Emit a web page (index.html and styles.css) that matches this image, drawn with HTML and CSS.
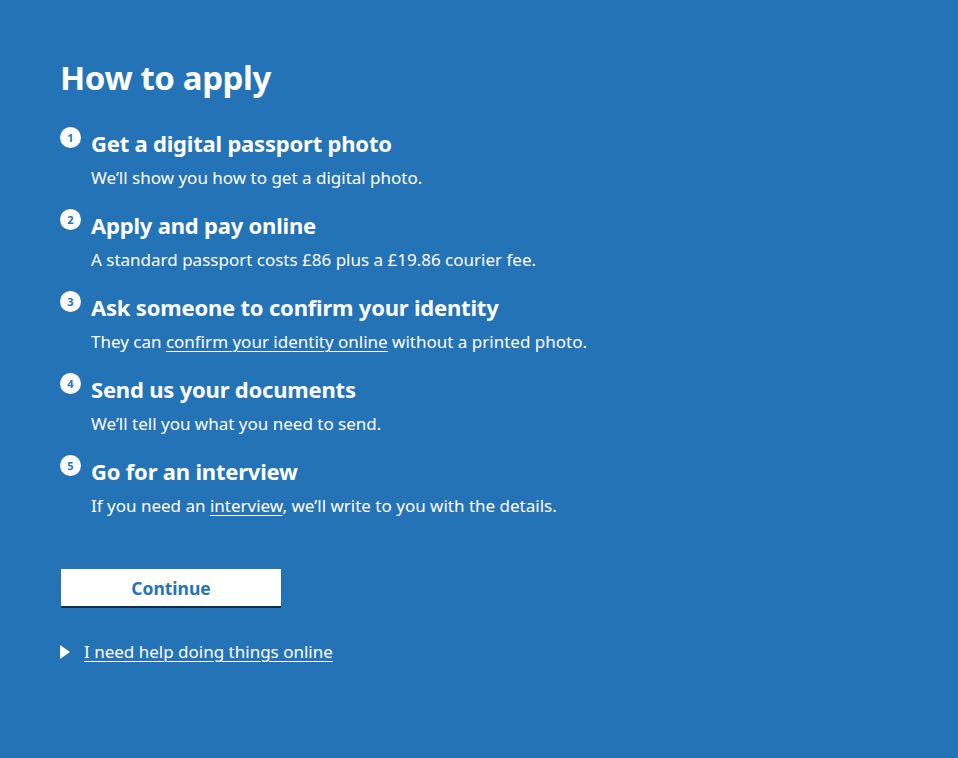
FILE: index.html
```html
<!DOCTYPE html>
<html lang="en">
<head>
<meta charset="utf-8">
<title>How to apply</title>
<link rel="stylesheet" href="styles.css">
</head>
<body>
<main class="page">
  <h1 class="title">How to apply</h1>
  <ol class="steps">
    <li class="step">
      <span class="num">1</span>
      <div class="step-body">
        <h2 class="step-title">Get a digital passport photo</h2>
        <p class="step-text">We’ll show you how to get a digital photo.</p>
      </div>
    </li>
    <li class="step">
      <span class="num">2</span>
      <div class="step-body">
        <h2 class="step-title">Apply and pay online</h2>
        <p class="step-text">A standard passport costs £86 plus a £19.86 courier fee.</p>
      </div>
    </li>
    <li class="step">
      <span class="num">3</span>
      <div class="step-body">
        <h2 class="step-title">Ask someone to confirm your identity</h2>
        <p class="step-text">They can <a href="#">confirm your identity online</a> without a printed photo.</p>
      </div>
    </li>
    <li class="step">
      <span class="num">4</span>
      <div class="step-body">
        <h2 class="step-title">Send us your documents</h2>
        <p class="step-text">We’ll tell you what you need to send.</p>
      </div>
    </li>
    <li class="step">
      <span class="num">5</span>
      <div class="step-body">
        <h2 class="step-title">Go for an interview</h2>
        <p class="step-text">If you need an <a href="#">interview</a>, we’ll write to you with the details.</p>
      </div>
    </li>
  </ol>
  <button class="btn" type="button">Continue</button>
  <div class="details">
    <span class="tri"></span>
    <a href="#" class="details-link">I need help doing things online</a>
  </div>
</main>
</body>
</html>
```
FILE: styles.css
```css
* { box-sizing: border-box; }
html, body {
  margin: 0;
  padding: 0;
  background: #2473b6;
}
body {
  font-family: "Noto Sans", "Open Sans", sans-serif;
  color: #ffffff;
}
.page {
  padding: 56px 60px 0 60px;
}
.title {
  margin: 0;
  font-size: 33px;
  line-height: 44px;
  font-weight: 700;
  letter-spacing: -0.4px;
}
.steps {
  list-style: none;
  margin: 30px 0 0 0;
  padding: 0;
  display: flex;
  flex-direction: column;
  gap: 21px;
}
.step {
  display: flex;
  align-items: flex-start;
  gap: 10px;
}
.num {
  flex: none;
  width: 21px;
  height: 21px;
  margin-top: -3px;
  border-radius: 50%;
  background: #fff;
  color: #2473b6;
  font-size: 11px;
  font-weight: 700;
  line-height: 21px;
  text-align: center;
}
.step-title {
  margin: 0;
  font-size: 22px;
  line-height: 26px;
  font-weight: 700;
  letter-spacing: -0.2px;
}
.step-text {
  margin: 9px 0 0 0;
  font-size: 17px;
  line-height: 26px;
}
.step-text a, .details-link {
  color: #fff;
  text-decoration: underline;
  text-underline-offset: 3px;
  text-decoration-thickness: 1px;
}
.btn {
  display: block;
  margin: 50px 0 0 1px;
  width: 220px;
  height: 37px;
  border: 0;
  background: #fff;
  color: #2473b6;
  font-family: inherit;
  font-size: 17.5px;
  font-weight: 700;
  box-shadow: 0 2px 0 #0b2f4f;
  padding: 0;
}
.details {
  margin-top: 34px;
  display: flex;
  align-items: center;
  gap: 14px;
}
.tri {
  width: 0;
  height: 0;
  border-top: 7px solid transparent;
  border-bottom: 7px solid transparent;
  border-left: 10px solid #fff;
}
.details-link {
  font-size: 17px;
  line-height: 24px;
}
```
